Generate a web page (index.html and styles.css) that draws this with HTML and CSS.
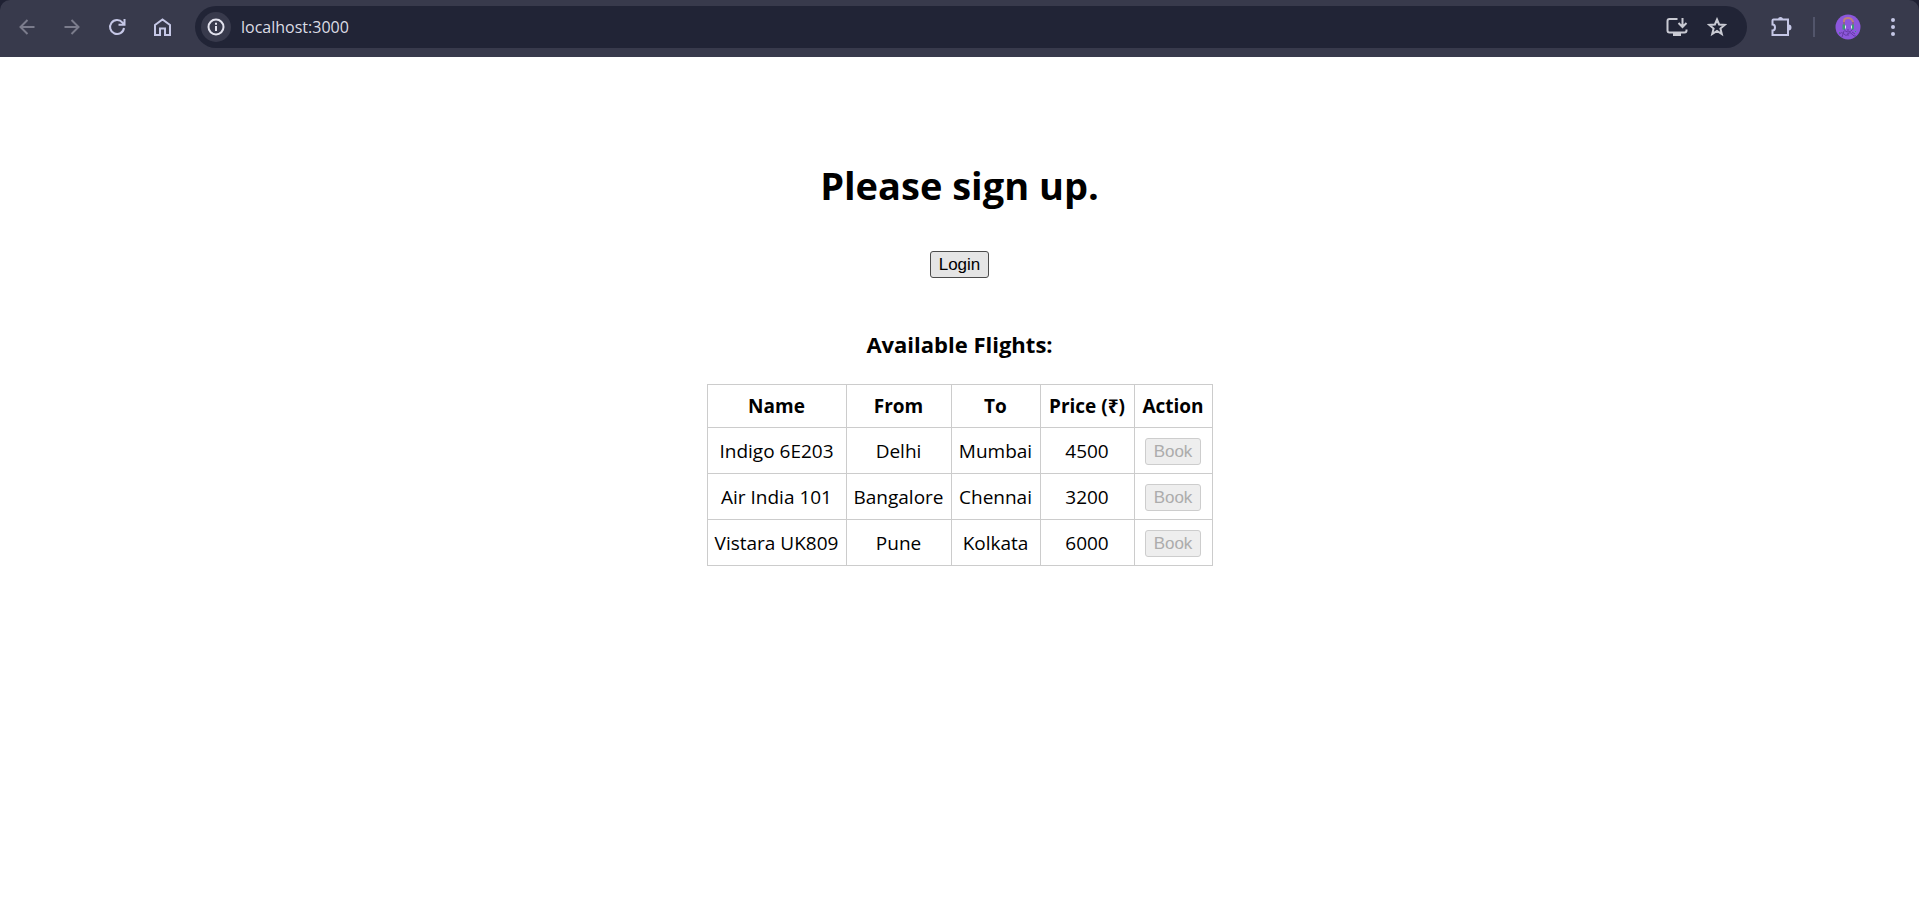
FILE: index.html
```html
<!DOCTYPE html>
<html lang="en">
<head>
<meta charset="utf-8">
<title>Flights</title>
<link rel="stylesheet" href="styles.css">
</head>
<body>
<header class="frame">
  <div class="toolbar">
    <nav class="nav" aria-label="Browser">
      <button class="icon-button" aria-label="Back" disabled>
        <svg width="16" height="16" viewBox="0 0 16 16"><path d="M15.500 8H2M8.500 1L1.500 8L8.500 15"/></svg>
      </button>
      <button class="icon-button" aria-label="Forward" disabled>
        <svg width="16" height="16" viewBox="0 0 16 16"><path d="M.5 8H14M7.500 1L14.500 8L7.500 15"/></svg>
      </button>
      <button class="icon-button" aria-label="Reload">
        <svg width="18" height="18" viewBox="0 0 18 18"><path d="M16 10A7 7 0 1 1 14.500 4.600L15.500 5.700M16.500 1V6.800H10.500"/></svg>
      </button>
      <button class="icon-button" aria-label="Home">
        <svg width="18" height="18" viewBox="0 0 18 18"><path d="M2 17V7L9.500 1.500L17 7V17H12V10.500H7V17Z"/></svg>
      </button>
    </nav>
    <div class="address">
      <button class="site-info" aria-label="Site information">
        <svg width="18" height="18" viewBox="0 0 18 18"><circle cx="9" cy="9" r="7.500"/><path d="M9 8V13M9 4.800V6.800"/></svg>
      </button>
      <input class="url" type="text" value="localhost:3000" aria-label="Address">
      <div class="address-actions">
        <button class="icon-button light" aria-label="Install">
          <svg width="22" height="20" viewBox="0 0 22 20"><path d="M11.500 2H3.500Q1.500 2 1.500 4V13.500Q1.500 15.500 3.500 15.500H18.500Q20.500 15.500 20.500 13.500V12.500M16.500 1V9M12.500 6L16.500 10L20.500 6"/><path class="solid" d="M7 15H15V19H7Z"/></svg>
        </button>
        <button class="icon-button light" aria-label="Bookmark">
          <svg width="20" height="20" viewBox="0 0 20 20"><path d="M10 2.500L12.100 7.500L17.700 7.900L13.400 11.500L14.800 17L10 14L5.200 17L6.600 11.500L2.300 7.900L7.900 7.500Z"/></svg>
        </button>
      </div>
    </div>
    <div class="tools">
      <button class="icon-button" aria-label="Extensions">
        <svg width="22" height="22" viewBox="0 0 22 22"><path d="M3.500 3.500H18V19H2.500V14.500Q5 14.500 5 11.500T2.500 8.500V4.500Q2.500 3.500 3.500 3.500Z"/><path class="solid" d="M8 3.500A2.500 2.500 0 0 1 13 3.500ZM18.500 8.500A3 3 0 0 1 18.500 14.500Z"/></svg>
      </button>
      <span class="divider"></span>
      <button class="icon-button avatar" aria-label="Profile">
        <svg width="26" height="26" viewBox="0 0 26 26">
          <circle class="disc" cx="13" cy="13" r="12.500"/>
          <path class="band" d="M9 11V7Q9 4 13 4T18 8V11"/>
          <path class="ink" d="M9 8V15Q10 18 13 18T18 15V8M4 20Q7 17 9 20T13 20T17 20T21 22M9 17L7 23M13 19V22M17 18L20 20M12 16H14"/>
          <path class="ear" d="M7.500 10.500H10V15.500H7.500ZM16.500 10.500H19V15.500H16.500Z"/>
          <path class="glow" d="M10 11.500H11V14.500H10ZM16 11.500H17V14.500H16Z"/>
          <path class="ear" d="M4 18H5V19H4ZM20 17H21V18H20Z"/>
        </svg>
      </button>
      <button class="icon-button menu" aria-label="Menu">
        <svg width="6" height="20" viewBox="0 0 6 20"><circle class="solid" cx="3" cy="3" r="2"/><circle class="solid" cx="3" cy="10" r="2"/><circle class="solid" cx="3" cy="17" r="2"/></svg>
      </button>
    </div>
  </div>
</header>
<main class="page">
  <h1 class="title">Please sign up.</h1>
  <button class="button">Login</button>
  <h2 class="subtitle" id="flights">Available Flights:</h2>
  <table class="flights" aria-labelledby="flights">
    <colgroup><col class="col-name"><col class="col-from"><col class="col-to"><col class="col-price"><col class="col-action"></colgroup>
    <thead>
      <tr><th>Name</th><th>From</th><th>To</th><th>Price (₹)</th><th>Action</th></tr>
    </thead>
    <tbody>
      <tr><td>Indigo 6E203</td><td>Delhi</td><td>Mumbai</td><td>4500</td><td><button class="button" disabled>Book</button></td></tr>
      <tr><td>Air India 101</td><td>Bangalore</td><td>Chennai</td><td>3200</td><td><button class="button" disabled>Book</button></td></tr>
      <tr><td>Vistara UK809</td><td>Pune</td><td>Kolkata</td><td>6000</td><td><button class="button" disabled>Book</button></td></tr>
    </tbody>
  </table>
</main>
</body>
</html>
```

FILE: styles.css
```css
* { box-sizing: border-box; }

body {
  margin: 0;
  background: #fff;
  color: #000;
  font-family: "Segoe UI", "Open Sans", "Noto Sans", sans-serif;
}

.frame { background: #1f2133; }

.toolbar {
  display: flex;
  align-items: center;
  padding: 6px 11px 9px 12px;
  background: #383a4c;
  border-radius: 10px 10px 0 0;
}

.nav { display: flex; gap: 15px; }

.icon-button {
  display: flex;
  align-items: center;
  justify-content: center;
  width: 30px;
  height: 30px;
  padding: 0;
  border: 0;
  background: none;
  color: #c5c7e6;
}
.icon-button:disabled { color: #7b7c8c; }
.icon-button.light { color: #c9cad3; }

svg {
  display: block;
  fill: none;
  stroke: currentColor;
  stroke-width: 2;
}
.solid { fill: currentColor; stroke: none; }

.address {
  display: flex;
  flex: 1;
  align-items: center;
  height: 42px;
  margin-left: 18px;
  padding: 0 15px 0 6px;
  border-radius: 21px;
  background: #212436;
}

.site-info {
  display: flex;
  align-items: center;
  justify-content: center;
  width: 30px;
  height: 30px;
  padding: 0;
  border: 0;
  border-radius: 50%;
  background: #383a4c;
  color: #e3e3ee;
}

.url {
  flex: 1;
  min-width: 0;
  margin-left: 10px;
  padding: 0;
  border: 0;
  background: none;
  color: #dcdce4;
  font: 16px "Segoe UI", "Open Sans", sans-serif;
}

.address-actions { display: flex; gap: 10px; }

.tools { display: flex; align-items: center; margin-left: 19px; }
.divider {
  width: 2px;
  height: 20px;
  margin: 0 18px 0 17px;
  background: #52556b;
}
.menu { margin-left: 15px; }

.disc { fill: #8c57dc; stroke: none; }
.band { stroke: #bd8277; }
.ink { stroke: #673ba8; stroke-width: 1; }
.ear { fill: #3d9b78; stroke: none; }
.glow { fill: #e1e9ef; stroke: none; }

.page {
  display: flex;
  flex-direction: column;
  align-items: center;
  padding: 102px 16px 40px;
}

.title {
  margin: 0;
  font-size: 38px;
  line-height: 52px;
}
.title + .button { margin-top: 40px; }

.subtitle {
  margin: 51px 0 25px;
  font-size: 22px;
  line-height: 30px;
}

.button {
  height: 27px;
  padding: 0 8px;
  border: 1px solid #4b4b4b;
  border-radius: 3px;
  background: #e5e5e5;
  color: #000;
  font: 17px/24px "Liberation Sans", Arial, sans-serif;
}
.button:disabled {
  border-color: #cdcdcd;
  background: #eee;
  color: #acacac;
}

.flights {
  border-collapse: collapse;
  font-size: 19px;
  line-height: 27px;
  text-align: center;
  white-space: nowrap;
}
.flights th,
.flights td { border: 1px solid #ccc; }
.flights th { padding: 8px 0 7px; }
.flights td { padding: 10px 0 8px; }
.flights td .button { display: block; margin: 0 auto; }
.col-name { width: 139px; }
.col-from { width: 105px; }
.col-to { width: 89px; }
.col-price { width: 94px; }
.col-action { width: 78px; }
```
